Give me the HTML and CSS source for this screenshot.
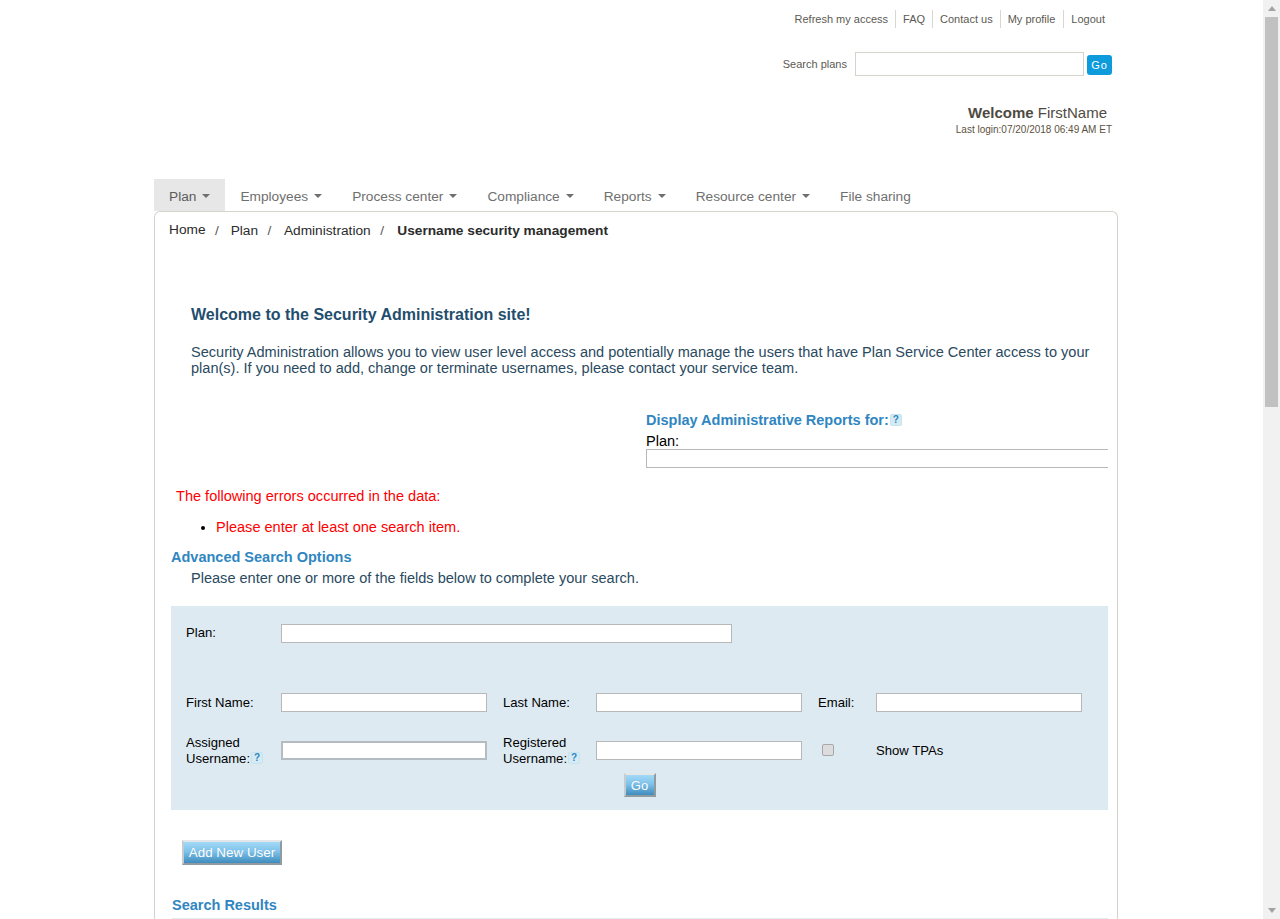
FILE: index.html
```html
<!DOCTYPE html>
<html lang="en">
<head>
    <link rel="stylesheet" href="styles.css">
    <meta charset="UTF-8">
    <title>Username security management</title>
</head>
<body>
    <div class="screen">
        <div class="viewport">
            <div class="wrap">
                <div class="top-links">
                    <a href="#">Refresh my access</a>
                    <a href="#">FAQ</a>
                    <a href="#">Contact us</a>
                    <a href="#" class="profile">My profile</a>
                    <a href="#">Logout</a>
                </div>

                <form class="plan-search">
                    <label for="search-plans">Search plans</label>
                    <input type="text" id="search-plans">
                    <button type="button" class="go-small">Go</button>
                </form>

                <div class="welcome"><b>Welcome</b> FirstName</div>
                <div class="last-login">Last login:07/20/2018 06:49 AM ET</div>

                <ul class="nav">
                    <li class="active">Plan<i class="caret"></i></li>
                    <li>Employees<i class="caret"></i></li>
                    <li>Process center<i class="caret"></i></li>
                    <li>Compliance<i class="caret"></i></li>
                    <li>Reports<i class="caret"></i></li>
                    <li>Resource center<i class="caret"></i></li>
                    <li>File sharing</li>
                </ul>

                <div class="content">
                    <div class="breadcrumb">
                        <a href="#" class="home">Home</a><span>/</span>
                        <a href="#">Plan</a><span>/</span>
                        <a href="#">Administration</a><span>/</span>
                        <b>Username security management</b>
                    </div>

                    <h1>Welcome to the Security Administration site!</h1>
                    <p class="intro">Security Administration allows you to view user level access and potentially manage the users that have Plan Service Center access to your plan(s). If you need to add, change or terminate usernames, please contact your service team.</p>

                    <div class="reports">
                        <h2>Display Administrative Reports for:<span class="help">?</span></h2>
                        <label for="report-plan">Plan:</label>
                        <div class="clip"><input type="text" id="report-plan"></div>
                    </div>

                    <p class="error-title">The following errors occurred in the data:</p>
                    <ul class="errors">
                        <li><span>Please enter at least one search item.</span></li>
                    </ul>

                    <h2 class="advanced">Advanced Search Options</h2>
                    <p class="hint">Please enter one or more of the fields below to complete your search.</p>

                    <form class="search-panel">
                        <div class="fields">
                            <label class="plan-label" for="plan">Plan:</label>
                            <input type="text" id="plan" class="plan-input">

                            <label for="first">First Name:</label>
                            <input type="text" id="first">
                            <label class="col" for="last">Last Name:</label>
                            <input type="text" id="last">
                            <label class="col" for="email">Email:</label>
                            <input type="text" id="email">

                            <label for="assigned">Assigned Username:<span class="help">?</span></label>
                            <input type="text" id="assigned" class="username thick">
                            <label class="col" for="registered">Registered Username:<span class="help">?</span></label>
                            <input type="text" id="registered" class="username">
                            <div class="col"><input type="checkbox" id="tpa" class="check"></div>
                            <label for="tpa">Show TPAs</label>
                        </div>
                        <div class="panel-go"><button type="button" class="btn">Go</button></div>
                    </form>

                    <button type="button" class="btn add-user">Add New User</button>

                    <h2 class="results">Search Results</h2>
                </div>
            </div>
        </div>

        <div class="scrollbar">
            <i class="arrow-up"></i>
            <div class="thumb"></div>
            <i class="arrow-down"></i>
        </div>
    </div>
</body>
</html>
```

FILE: styles.css
```css
html, body {
    margin: 0;
    padding: 0;
    height: 100%;
    overflow: hidden;
}

body {
    font-family: "Liberation Sans", Arial, sans-serif;
    font-size: 14.55px;
    color: #000;
    background-color: #fff;
}

a {
    color: inherit;
    text-decoration: none;
}

input[type="text"] {
    box-sizing: border-box;
    height: 19px;
    margin: 0;
    padding: 0 2px;
    border: 1px solid #b8b8b8;
    background-color: #fff;
}

.screen {
    display: flex;
    height: 919px;
}

.viewport {
    flex: 1;
    overflow: hidden;
}

.wrap {
    width: 964px;
    margin-left: 154px;
}

/* top right */
.top-links {
    display: flex;
    justify-content: flex-end;
    padding: 10px 6px 0 0;
    font-size: 11px;
    color: #5c5a52;
}

.top-links a {
    height: 18px;
    line-height: 18px;
    padding: 0 7px 0 7px;
    border-left: 1px solid #d8d6ce;
}

.top-links a:first-child {
    border-left: none;
}

.top-links a.profile {
    padding-right: 8px;
}

.plan-search {
    display: flex;
    justify-content: flex-end;
    align-items: flex-start;
    margin: 24px 6px 0 0;
    font-size: 11px;
    color: #5c5a52;
}

.plan-search label {
    line-height: 24px;
    margin-right: 8px;
}

.plan-search input[type="text"] {
    width: 229px;
    height: 24px;
    border-color: #d5d3cb;
}

.go-small {
    width: 25px;
    height: 20px;
    margin: 3px 0 0 3px;
    padding: 0;
    border: none;
    border-radius: 3px;
    background-color: #0e9bdc;
    color: #fff;
    font-family: inherit;
    font-size: 11px;
    letter-spacing: 1px;
}

.welcome {
    margin: 28px 11px 0 0;
    text-align: right;
    font-size: 15px;
    line-height: 18px;
    color: #4f4a3f;
}

.last-login {
    margin: 2px 6px 0 0;
    text-align: right;
    font-size: 10px;
    line-height: 12px;
    color: #5c5241;
}

/* main menu */
.nav {
    display: flex;
    list-style: none;
    margin: 43px 0 0 0;
    padding: 0;
    height: 32px;
    font-size: 13.7px;
    line-height: 36px;
    color: #6f6f6f;
}

.nav li {
    padding: 0 15px;
}

.nav li.active {
    background-color: #e7e7e7;
    color: #5c5c5c;
}

.caret {
    display: inline-block;
    margin-left: 6px;
    vertical-align: 3px;
    border-top: 4px solid #6f6f6f;
    border-left: 4px solid transparent;
    border-right: 4px solid transparent;
}

/* content box */
.content {
    box-sizing: border-box;
    height: 760px;
    padding: 0 9px 0 16px;
    border: 1px solid #d5d3cb;
    border-bottom: none;
    border-radius: 6px 6px 0 0;
}

.breadcrumb {
    margin: 10px 0 0 -2px;
    font-size: 13.7px;
    line-height: 18px;
    color: #2b2b2b;
    white-space: nowrap;
}

.breadcrumb span {
    margin: 0 9.5px;
    color: #555;
}

.breadcrumb .home + span {
    margin-right: 8px;
}

.breadcrumb .home {
    position: relative;
    top: -1px;
}

h1 {
    margin: 65px 0 0 20px;
    font-size: 16px;
    line-height: 20px;
    color: #1f4e6e;
}

.intro {
    margin: 19px 0 0 20px;
    line-height: 16px;
    color: #2a4a60;
}

.reports {
    margin: 35px 0 0 475px;
}

h2 {
    margin: 0;
    font-size: 14.5px;
    line-height: 18px;
    color: #2f86c1;
}

.reports label {
    display: block;
    margin-top: 5px;
    line-height: 15px;
}

.clip {
    overflow: hidden;
}

.clip input[type="text"] {
    width: 480px;
}

.help {
    display: inline-block;
    box-sizing: border-box;
    width: 12px;
    height: 12px;
    margin-left: 1px;
    border: 1px solid #c9e3ee;
    border-radius: 2px;
    background-color: #d5ebf4;
    color: #2f86c1;
    font-size: 10px;
    font-weight: bold;
    line-height: 10px;
    text-align: center;
    vertical-align: 2px;
}

.error-title {
    margin: 19px 0 0 5px;
    line-height: 18px;
    color: #f00;
}

.errors {
    margin: 13px 0 0 0;
    padding-left: 45px;
    line-height: 18px;
}

.errors span {
    color: #f00;
}

.advanced {
    margin-top: 12px;
}

.hint {
    margin: 3px 0 0 20px;
    line-height: 18px;
    color: #2a4a60;
}

/* search form */
.search-panel {
    box-sizing: border-box;
    height: 204px;
    margin-top: 19px;
    padding: 18px 0 0 15px;
    background-color: #deeaf2;
    font-size: 13.1px;
}

.fields {
    display: grid;
    grid-template-columns: 95px 206px 109px 206px 74px 206px;
    grid-template-rows: 46px 19px 32px;
    row-gap: 23px;
    align-items: center;
    line-height: 16px;
}

.plan-label {
    align-self: start;
    line-height: 17px;
}

.plan-input {
    align-self: start;
    grid-column: 2 / 7;
    width: 451px;
}

.col {
    padding-left: 16px;
}

.fields input.username {
    align-self: start;
    margin-top: 6px;
}

.fields input.thick {
    border: 2px solid #b4bcc2;
}

.check {
    display: block;
    box-sizing: border-box;
    width: 12px;
    height: 12px;
    margin: -2px 0 0 4px;
    appearance: none;
    border: 1px solid #a8a8a8;
    border-radius: 2px;
    background-color: #dcdcdc;
}

.panel-go {
    margin: 6px 15px 0 0;
    text-align: center;
}

.btn {
    padding: 0;
    border: 2px solid;
    border-color: #e3e7ea #8f9aa1 #8f9aa1 #c4ccd1;
    background: linear-gradient(#a3d9f7, #7fc2ea 45%, #3f8cbd);
    color: #fff;
    font-family: inherit;
    font-size: 13.4px;
    text-shadow: 0 0 1px #6aa9d0;
}

.panel-go .btn {
    width: 32px;
    height: 24px;
    font-size: 13px;
}

.add-user {
    display: block;
    width: 100px;
    height: 25px;
    margin: 30px 0 0 11px;
}

.results {
    margin: 31px 0 0 1px;
    padding-bottom: 4px;
    border-bottom: 1px solid #deeef2;
}

/* scrollbar */
.scrollbar {
    position: relative;
    width: 17px;
    height: 919px;
    background-color: #f1f1f1;
}

.thumb {
    position: absolute;
    top: 17px;
    left: 2px;
    width: 13px;
    height: 390px;
    background-color: #c1c1c1;
}

.arrow-up, .arrow-down {
    position: absolute;
    left: 5px;
    border-left: 4px solid transparent;
    border-right: 4px solid transparent;
}

.arrow-up {
    top: 6px;
    border-bottom: 5px solid #a3a3a3;
}

.arrow-down {
    bottom: 6px;
    border-top: 5px solid #a3a3a3;
}
```
